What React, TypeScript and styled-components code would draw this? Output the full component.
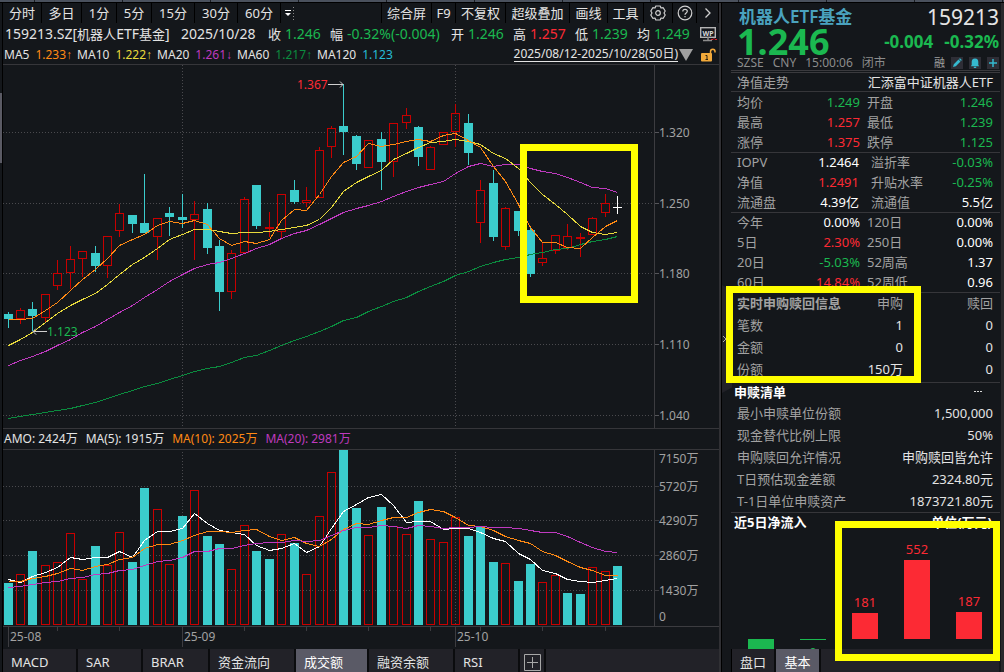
import React from 'react';
import styled, { createGlobalStyle, css } from 'styled-components';

const color = {
  bg: '#14171b',
  tab: '#222228',
  tabActive: '#5a5a66',
  line: '#36363a',
  text: '#e4e4e4',
  dim: '#a2a2a2',
  faint: '#8c8c8c',
  white: '#ffffff',
  green: '#1bb850',
  red: '#fc2a34',
  candleRed: '#c80000',
  cyan: '#3bcccc',
  orange: '#ff8a14',
  yellow: '#e8da3c',
  purple: '#bf3abf',
  deepGreen: '#0b8c3f',
  sky: '#26bcd6',
  mark: '#ffff00',
};

type Tone = keyof typeof color;

const GlobalStyle = createGlobalStyle`
  * { box-sizing: border-box; }
  body {
    margin: 0;
    background: ${color.bg};
    color: ${color.text};
    font-family: "Noto Sans", "Noto Sans CJK SC", sans-serif;
    font-size: 13px;
    line-height: 20px;
  }
  button { font: inherit; color: inherit; background: none; border: 0; padding: 0; cursor: pointer; }
  svg { display: block; }
`;

/* ---------- shell ---------- */

const Shell = styled.div`
  display: flex;
  flex-direction: column;
  min-height: 100vh;
`;

const WindowStrip = styled.div`
  height: 3px;
  border-bottom: 1px solid #000;
  background: repeating-linear-gradient(90deg, #4a515d 0 34px, #1a1d22 34px 35px, #4a515d 35px 88px);
`;

const Columns = styled.div`
  display: flex;
  flex: 1;
`;

const ScrollRail = styled.div`
  width: 3px;
  flex: none;
  border-right: 1px solid #000;
  padding-top: 90px;
`;

const ScrollThumb = styled.div`
  height: 70px;
  background: #5a5a64;
`;

const ChartPane = styled.main`
  flex: 1;
  min-width: 0;
  display: flex;
  flex-direction: column;
`;

/* ---------- chart pane ---------- */

const Toolbar = styled.nav`
  display: flex;
  height: 20px;
`;

const ToolButton = styled.button<{ $w: number }>`
  width: ${(p) => p.$w}px;
  display: flex;
  align-items: center;
  justify-content: center;
  white-space: nowrap;
  border-right: 1px solid #000;
`;

const ToolSpacer = styled.div`
  flex: 1;
  border-right: 1px solid #000;
`;

const QuoteLine = styled.div`
  display: flex;
  align-items: center;
  height: 22px;
  padding: 0 2px;
  font-size: 14px;
  white-space: nowrap;
`;

const Symbol = styled.span`
  width: 176px;
`;

const QuoteDate = styled.span`
  width: 87px;
`;

const QuoteItem = styled.span<{ $w: number }>`
  display: flex;
  gap: 4px;
  width: ${(p) => p.$w}px;
`;

const Caption = styled.span`
  font-size: 13px;
`;

const Value = styled.span<{ $tone?: Tone }>`
  color: ${(p) => color[p.$tone ?? 'text']};
`;

const Arrow = styled.span`
  font-family: "Liberation Sans", sans-serif;
`;

const PushRight = styled.span`
  margin-left: auto;
`;

const AverageLine = styled.div`
  display: flex;
  align-items: center;
  height: 20px;
  padding: 0 3px 0 1px;
  font-size: 12px;
  white-space: nowrap;
  border-bottom: 1px solid ${color.line};
`;

const Average = styled.span`
  display: flex;
  gap: 6px;
  margin-right: 5px;
`;

const RangeButton = styled.button`
  display: flex;
  align-items: center;
  margin-left: auto;
  margin-right: 8px;
`;

const RangeText = styled.span`
  line-height: 14px;
  border-bottom: 1px solid ${color.text};
`;

const AmountLine = styled.div`
  display: flex;
  gap: 8px;
  align-items: center;
  height: 22px;
  padding-left: 1px;
  font-size: 12px;
  border-top: 1px solid ${color.line};
  border-bottom: 1px solid ${color.line};
`;

const Plot = styled.svg`
  width: 100%;
  height: auto;
  font-size: 12px;
`;

const BottomTabs = styled.nav`
  display: flex;
  height: 23px;
  background: ${color.tab};
`;

const BottomTab = styled.button<{ $w: number; $active?: boolean; $center?: boolean }>`
  width: ${(p) => p.$w}px;
  height: 23px;
  display: flex;
  align-items: center;
  justify-content: ${(p) => (p.$center ? 'center' : 'flex-start')};
  padding-left: ${(p) => (p.$center ? 0 : 8)}px;
  padding-top: 3px;
  border-right: 2px solid #0b0c0e;
  ${(p) =>
    p.$active &&
    css`
      background: ${color.tabActive};
      color: ${color.white};
    `}
`;

/* ---------- side pane ---------- */

const Divider = styled.div`
  width: 3px;
  flex: none;
  background: #303034;
  border-right: 1px solid #000;
`;

const SidePane = styled.aside`
  position: relative;
  width: 282px;
  flex: none;
  display: flex;
  flex-direction: column;
  padding: 0 1px 0 9px;
  border-right: 3px solid #29292c;
`;

const CollapseHandle = styled.button`
  position: absolute;
  left: 0;
  top: 282px;
  width: 10px;
  height: 108px;
  background: ${color.tab};
  clip-path: polygon(0 0, 100% 5%, 100% 95%, 0 100%);
`;

const Highlight = styled.div<{ $left: number; $top: number; $w: number; $h: number }>`
  position: absolute;
  left: ${(p) => p.$left}px;
  top: ${(p) => p.$top}px;
  width: ${(p) => p.$w}px;
  height: ${(p) => p.$h}px;
  border: 7px solid ${color.mark};
  pointer-events: none;
`;

const Head = styled.header`
  height: 70px;
  padding: 3px 1px 0 6px;
  border-bottom: 3px double #3a3a3e;
`;

const HeadRow = styled.div<{ $h: number }>`
  display: flex;
  justify-content: space-between;
  align-items: center;
  height: ${(p) => p.$h}px;
`;

const FundName = styled.h1`
  margin: 0 0 0 2px;
  font-size: 17px;
  font-weight: 600;
  color: #4aa2be;
`;

const Code = styled.span`
  font-size: 21px;
`;

const Price = styled.strong`
  font-size: 36px;
  color: ${color.green};
`;

const Change = styled.span`
  display: flex;
  gap: 11px;
  font-size: 17px;
  font-weight: 700;
  color: ${color.green};
`;

const Meta = styled.div`
  display: flex;
  font-size: 12px;
  gap: 9px;
  color: ${color.faint};
`;

const HeadTools = styled.div`
  display: flex;
  align-items: center;
  gap: 6px;
  font-size: 11px;
  color: ${color.dim};
`;

const MiniButton = styled.button`
  width: 12px;
  height: 12px;
  background: #2e2e36;
`;

const NavRow = styled.div`
  display: flex;
  justify-content: space-between;
  align-items: center;
  height: 19px;
  padding: 0 7px 1px 6px;
  border-bottom: 1px solid ${color.line};
`;

const Table = styled.table<{ $row: number; $bottom?: number }>`
  width: 100%;
  table-layout: fixed;
  border-collapse: separate;
  border-spacing: 0;
  border-bottom: 1px solid ${color.line};
  margin: 0 0 -1px;
  padding-bottom: ${(p) => p.$bottom ?? 0}px;
  tr { height: ${(p) => p.$row}px; }
  th, td { padding: 0; white-space: nowrap; line-height: ${(p) => p.$row}px; }
  th { font-weight: 400; text-align: left; color: ${color.dim}; }
  td { text-align: right; }
  th:first-child { padding-left: 6px; }
  td:last-child, th:last-child { padding-right: 7px; }
`;

const SecondLabel = styled.th<{ $gap: number }>`
  && { padding-left: ${(p) => p.$gap}px; }
`;

const NumberHead = styled.th`
  && { text-align: right; }
`;

const BoldHead = styled.th`
  && { font-weight: 700; }
`;

const Section = styled.div`
  display: flex;
  justify-content: space-between;
  align-items: center;
  height: 20px;
  padding: 0 8px 0 3px;
  font-weight: 700;
  color: ${color.white};
`;

const MoreButton = styled.button`
  display: flex;
  width: 18px;
`;

const FlowChart = styled.svg`
  width: 100%;
  height: 117px;
  overflow: hidden;
  font-size: 13px;
`;

const SideTabs = styled(BottomTabs)`
  margin-top: auto;
  margin-right: 1px;
  border-left: 1px solid #000;
`;

/* ---------- data ---------- */

// [high, body top, body bottom, low] in plot units, oldest first
const candles: number[][] = [
  [312, 314, 319, 328], [308, 310, 319, 324], [302, 309, 316, 331], [294, 294, 318, 322], [260, 273, 286, 290],
  [246, 259, 273, 289], [251, 251, 259, 277], [246, 253, 266, 272], [236, 236, 266, 278], [204, 213, 231, 237],
  [215, 215, 224, 233], [174, 223, 233, 233], [218, 218, 237, 260], [207, 213, 217, 236], [194, 217, 220, 228],
  [201, 214, 220, 260], [203, 209, 248, 254], [240, 246, 292, 311], [250, 253, 292, 299], [197, 199, 253, 253],
  [185, 185, 226, 229], [212, 227, 229, 237], [194, 194, 232, 238], [180, 190, 202, 204], [187, 200, 203, 207],
  [147, 150, 198, 198], [126, 128, 147, 158], [84, 126, 132, 155], [135, 136, 164, 170], [140, 140, 168, 168],
  [132, 139, 162, 190], [123, 123, 162, 177], [108, 115, 123, 129], [126, 127, 157, 166], [146, 147, 170, 170],
  [132, 132, 145, 145], [104, 113, 132, 147], [114, 123, 153, 165], [180, 190, 223, 243], [170, 183, 237, 241],
  [207, 208, 247, 250], [211, 211, 231, 236], [228, 230, 274, 277], [242, 258, 263, 266], [235, 235, 251, 254],
  [224, 236, 248, 250], [233, 237, 239, 257], [217, 218, 235, 235], [194, 203, 213, 217], [196, 207, 208, 214],
];
const candleKinds = 'drdrrrrdrrddrddrddrrdrrdrrrddrdrrdrrrdrdrddrrrrrrw';

const volumes = [
  583, 574, 551, 565, 562, 533, 579, 546, 565, 532, 562, 488, 509, 564, 516, 490, 536, 544, 569, 525, 551, 559, 534,
  543, 574, 516, 472, 450, 508, 535, 507, 526, 534, 501, 539, 542, 517, 536, 526, 562, 563, 581, 564, 582, 575, 593,
  594, 567, 571, 566,
];
const volumeKinds = 'drdrrrrdrrddrrdrddrrddrdrrrddrdrrdrrrdddrddrrddrrd';

const priceLines: { tone: Tone; ys: number[] }[] = [
  {
    tone: 'deepGreen',
    ys: [418, 416, 414, 412, 410, 408, 405, 402, 398, 394, 390, 386, 383, 379, 375, 371, 368, 366, 362, 357, 355, 350, 345, 340, 336, 331, 326, 320, 317, 311, 306, 301, 297, 291, 286, 281, 275, 271, 266, 262, 259, 257, 254, 252, 249, 248, 244, 241, 239, 236],
  },
  {
    tone: 'purple',
    ys: [365, 360, 356, 351, 345, 339, 332, 326, 319, 312, 305, 297, 289, 281, 274, 268, 264, 262, 258, 253, 248, 244, 238, 233, 230, 224, 218, 212, 208, 205, 201, 196, 191, 187, 184, 181, 173, 166, 163, 166, 164, 164, 168, 171, 173, 177, 182, 187, 188, 192],
  },
  {
    tone: 'yellow',
    ys: [345, 339, 332, 322, 313, 305, 299, 293, 284, 274, 264, 257, 248, 239, 234, 229, 229, 231, 233, 232, 232, 231, 229, 227, 225, 219, 207, 191, 182, 176, 170, 159, 153, 147, 142, 141, 139, 141, 144, 153, 158, 168, 182, 194, 204, 214, 226, 232, 234, 232],
  },
  {
    tone: 'orange',
    ys: [319, 319, 318, 310, 302, 290, 279, 269, 258, 245, 239, 234, 225, 221, 223, 220, 224, 238, 245, 241, 243, 239, 220, 209, 210, 194, 176, 162, 156, 143, 146, 144, 141, 139, 141, 135, 133, 140, 147, 166, 181, 204, 227, 242, 242, 247, 248, 237, 226, 220],
  },
];

const volumeLines: { tone: Tone; ys: number[] }[] = [
  {
    tone: 'white',
    ys: [579, 582, 576, 572, 567, 557, 559, 557, 557, 551, 557, 540, 531, 531, 528, 513, 523, 530, 532, 534, 545, 550, 548, 543, 552, 546, 528, 511, 504, 497, 494, 505, 522, 521, 521, 529, 528, 528, 532, 538, 541, 553, 559, 570, 573, 579, 581, 582, 580, 578],
  },
  {
    tone: 'orange',
    ys: [581, 581, 578, 576, 573, 568, 570, 566, 564, 559, 557, 548, 544, 544, 540, 535, 531, 531, 532, 530, 529, 536, 540, 537, 543, 546, 539, 529, 523, 524, 520, 517, 517, 512, 509, 511, 517, 525, 526, 530, 536, 540, 543, 551, 555, 561, 567, 570, 575, 575],
  },
  {
    tone: 'purple',
    ys: [587, 586, 584, 582, 581, 578, 577, 574, 573, 570, 569, 565, 561, 560, 557, 551, 551, 548, 548, 545, 543, 542, 542, 540, 541, 540, 535, 530, 527, 527, 525, 526, 528, 525, 526, 528, 527, 527, 526, 527, 527, 528, 530, 532, 532, 536, 542, 547, 551, 552],
  },
];

const slotX = (i: number) => Math.floor(8 + 12.44 * i);
const toPoints = (ys: number[]) => ys.map((y, i) => `${slotX(i) + 0.5},${y + 0.5}`).join(' ');

const priceTicks: [number, string][] = [
  [132, '1.320'], [203, '1.250'], [273, '1.180'], [344, '1.110'], [415, '1.040'],
];
const volumeTicks: [number, string][] = [
  [486, '5720万'], [520, '4290万'], [555, '2860万'], [590, '1430万'],
];
const months: [number, string][] = [[8, '25-08'], [182, '25-09'], [455, '25-10']];
const weekTicks = [4, 9, 19, 24, 29, 34, 38, 43, 48];

type Cell = [string, string, Tone];

const blocks: { widths: number[]; rows: [Cell, Cell][] }[] = [
  {
    widths: [66, 63, 63],
    rows: [
      [['均价', '1.249', 'green'], ['开盘', '1.246', 'green']],
      [['最高', '1.257', 'red'], ['最低', '1.239', 'green']],
      [['涨停', '1.375', 'red'], ['跌停', '1.125', 'green']],
    ],
  },
  {
    widths: [66, 62, 65],
    rows: [
      [['IOPV', '1.2464', 'white'], ['溢折率', '-0.03%', 'green']],
      [['净值', '1.2491', 'red'], ['升贴水率', '-0.25%', 'green']],
      [['流通盘', '4.39亿', 'white'], ['流通值', '5.5亿', 'white']],
    ],
  },
  {
    widths: [66, 63, 63],
    rows: [
      [['今年', '0.00%', 'white'], ['120日', '0.00%', 'white']],
      [['5日', '2.30%', 'red'], ['250日', '0.00%', 'white']],
      [['20日', '-5.03%', 'green'], ['52周高', '1.37', 'white']],
      [['60日', '14.84%', 'red'], ['52周低', '0.96', 'white']],
    ],
  },
];

const creations = [['笔数', '1', '0'], ['金额', '0', '0'], ['份额', '150万', '0']];

const basket = [
  ['最小申赎单位份额', '1,500,000'],
  ['现金替代比例上限', '50%'],
  ['申购赎回允许情况', '申购赎回皆允许'],
  ['T日预估现金差额', '2324.80元'],
  ['T-1日单位申赎资产', '1873721.80元'],
];

/* ---------- charts ---------- */

const PriceChart = () => (
  <Plot viewBox="3 65 716 363" role="img" aria-label="日K线">
    <g stroke="#4a4a4e" strokeDasharray="1 2" shapeRendering="crispEdges">
      {priceTicks.map(([y]) => <line key={y} x1="3" x2="654" y1={y + 0.5} y2={y + 0.5} />)}
      <line x1="182.5" x2="182.5" y1="65" y2="428" />
      <line x1="455.5" x2="455.5" y1="65" y2="428" />
    </g>
    <line x1="654.5" x2="654.5" y1="65" y2="428" stroke="#3c3c40" />
    {priceTicks.map(([y, label]) => (
      <g key={label}>
        <line x1="655" x2="659" y1={y + 0.5} y2={y + 0.5} stroke="#55555a" />
        <text x="659" y={y + 5} fill={color.dim}>{label}</text>
      </g>
    ))}
    <g shapeRendering="crispEdges">
      {candles.map(([high, top, bottom, low], i) => {
        const x = slotX(i);
        const kind = candleKinds[i];
        if (kind === 'd') {
          return (
            <g key={i} fill={color.cyan}>
              <rect x={x} y={high} width="1" height={low - high} />
              <rect x={x - 4} y={top} width="9" height={bottom - top} />
            </g>
          );
        }
        const tint = kind === 'w' ? color.white : color.candleRed;
        return (
          <g key={i} fill={tint}>
            <rect x={x} y={high} width="1" height={kind === 'w' ? low - high : Math.max(0, top - high)} />
            <rect x={x} y={bottom} width="1" height={Math.max(0, low - bottom)} />
            {bottom - top < 3 ? (
              <rect x={x - 4} y={top} width="9" height={bottom - top} />
            ) : (
              <rect x={x - 3.5} y={top + 0.5} width="8" height={bottom - top - 1} fill="none" stroke={tint} />
            )}
          </g>
        );
      })}
      {priceLines.map((l) => (
        <polyline key={l.tone} points={toPoints(l.ys)} fill="none" stroke={color[l.tone]} />
      ))}
    </g>
    <g fill="none" stroke="#cfcfcf">
      <path d="M328 84.5H343M340 81.5L343 84.5L340 87.5" />
      <path d="M47 331.5H33M36 328.5L33 331.5L36 334.5" />
    </g>
    <text x="297" y="89" fill={color.red}>1.367</text>
    <text x="47" y="336" fill={color.green}>1.123</text>
    <rect x="523.5" y="147.5" width="111" height="152" fill="none" stroke={color.mark} strokeWidth="7" />
  </Plot>
);

const VolumeChart = () => (
  <Plot viewBox="3 450 716 199" role="img" aria-label="成交额">
    <g stroke="#4a4a4e" strokeDasharray="1 2" shapeRendering="crispEdges">
      {volumeTicks.map(([y]) => <line key={y} x1="3" x2="654" y1={y + 0.5} y2={y + 0.5} />)}
      <line x1="182.5" x2="182.5" y1="452" y2="626" />
      <line x1="455.5" x2="455.5" y1="452" y2="626" />
    </g>
    <g stroke="#3c3c40" shapeRendering="crispEdges">
      <line x1="654.5" x2="654.5" y1="450" y2="626" />
      <line x1="3" x2="719" y1="626.5" y2="626.5" />
      {weekTicks.map((i) => <line key={i} x1={slotX(i) + 0.5} x2={slotX(i) + 0.5} y1="627" y2="631" />)}
      {months.map(([x]) => <line key={x} x1={x + 0.5} x2={x + 0.5} y1="627" y2="647" />)}
      {volumeTicks.map(([y]) => <line key={y} x1="655" x2="659" y1={y + 0.5} y2={y + 0.5} />)}
    </g>
    <g fill={color.dim}>
      {months.map(([x, label]) => <text key={x} x={x + 2} y="641">{label}</text>)}
      <text x="659" y="463">7150万</text>
      {volumeTicks.map(([y, label]) => <text key={y} x="659" y={y + 5}>{label}</text>)}
      <text x="659" y="621">0</text>
    </g>
    <g shapeRendering="crispEdges">
      {volumes.map((top, i) =>
        volumeKinds[i] === 'd' ? (
          <rect key={i} x={slotX(i) - 4} y={top} width="9" height={625 - top} fill={color.cyan} />
        ) : (
          <rect key={i} x={slotX(i) - 3.5} y={top + 0.5} width="8" height={624 - top} fill="none" stroke={color.candleRed} />
        ),
      )}
      {volumeLines.map((l) => (
        <polyline key={l.tone} points={toPoints(l.ys)} fill="none" stroke={color[l.tone]} />
      ))}
    </g>
  </Plot>
);

const NetFlowChart = () => (
  <FlowChart viewBox="731 532 269 117" preserveAspectRatio="xMinYMin meet" role="img" aria-label="近5日净流入">
    <g fill={color.green}>
      <rect x="748" y="639" width="26" height="10" />
      <rect x="800" y="639" width="26" height="1" />
      <text x="813" y="657" textAnchor="middle">0</text>
    </g>
    <g fill={color.red} textAnchor="middle">
      <rect x="852" y="613" width="26" height="26" />
      <text x="865" y="607">181</text>
      <rect x="904" y="560" width="26" height="79" />
      <text x="917" y="554">552</text>
      <rect x="956" y="612" width="26" height="27" />
      <text x="969" y="606">187</text>
    </g>
  </FlowChart>
);

/* ---------- icons ---------- */

const MoreIcon = () => (
  <svg width="14" height="20" viewBox="0 0 14 20">
    <rect x="4" y="7" width="6" height="1" fill="#fff" />
    <path d="M4 10h6l-3 3z" fill="#fff" />
    <path d="M12.5 4v14" stroke="#8a8a8a" strokeDasharray="1 2" />
  </svg>
);

const GearIcon = () => (
  <svg width="16" height="16" viewBox="0 0 16 16" fill="none" stroke="#d0d0d0" strokeWidth="1.2" strokeLinejoin="round">
    <path d="M5.8 1h4.4l.8 2 2.200-.3 2 3.300L14 8l1.200 2-2 3.300L11 13l-.8 2H5.800L5 13l-2.200.3-2-3.300L2 8 .8 6l2-3.300L5 3z" />
    <circle cx="8" cy="8" r="2.300" />
  </svg>
);

const HelpIcon = () => (
  <svg width="16" height="16" viewBox="0 0 16 16" fill="none" stroke="#d0d0d0" strokeWidth="1.200">
    <circle cx="8" cy="8" r="6.800" />
    <path d="M5.800 6.400C5.800 3.600 10.300 3.700 10.300 6.300 10.300 8 8 7.900 8 9.800M8 11v1.300" />
  </svg>
);

const ChevronIcon = () => (
  <svg width="10" height="12" viewBox="0 0 10 12" fill="none" stroke="#d0d0d0" strokeWidth="1.300">
    <path d="M2.500 1.500L7 6L2.500 10.500" />
  </svg>
);

const ScreenIcon = () => (
  <svg width="17" height="16" viewBox="0 0 17 16">
    <rect x="0.700" y="1.700" width="14.600" height="9.600" fill="none" stroke="#b4b4b4" strokeWidth="1.400" />
    <text x="8" y="9.500" fontSize="7" fontWeight="700" fill="#d8d8d8" textAnchor="middle">WP</text>
    <path d="M8 11v3M3 14.500h9" stroke="#8c8c8c" strokeWidth="1.500" />
    <path d="M11 13.500h2l1-1 1 1h2" stroke="#e0202a" fill="none" />
  </svg>
);

const LockIcon = () => (
  <svg width="15" height="14" viewBox="0 0 15 14">
    <path d="M9.500 6V3.500C9.500 0.500 14 0.500 14 3.500V4.500" fill="none" stroke="#f2a93a" strokeWidth="1.500" />
    <rect x="0" y="5" width="11" height="8.500" rx="1" fill="#f2a93a" />
    <path d="M4.500 7.500h1.500v4M4.500 11.500h2.500" fill="none" stroke="#2a2110" />
  </svg>
);

/* ---------- page ---------- */

const periods: [string, number][] = [
  ['分时', 39], ['多日', 40], ['1分', 35], ['5分', 35], ['15分', 43], ['30分', 43], ['60分', 43],
];
const tools: [string, number][] = [
  ['综合屏', 50], ['F9', 24], ['不复权', 50], ['超级叠加', 64], ['画线', 38], ['工具', 36],
];
const quotes: [string, string, Tone, number][] = [
  ['收', '1.246', 'green', 62],
  ['幅', '-0.32%(-0.004)', 'green', 121],
  ['开', '1.246', 'green', 62],
  ['高', '1.257', 'red', 62],
  ['低', '1.239', 'green', 62],
  ['均', '1.249', 'green', 54],
];
const averages: [string, string, string, Tone][] = [
  ['MA5', '1.233', '↑', 'orange'],
  ['MA10', '1.222', '↑', 'yellow'],
  ['MA20', '1.261', '↓', 'purple'],
  ['MA60', '1.217', '↑', 'deepGreen'],
  ['MA120', '1.123', '', 'sky'],
];
const indicators: [string, number][] = [
  ['MACD', 75], ['SAR', 65], ['BRAR', 67], ['资金流向', 86], ['成交额', 73], ['融资余额', 86], ['RSI', 65],
];

export default function App() {
  return (
    <>
      <GlobalStyle />
      <Shell>
        <WindowStrip />
        <Columns>
          <ScrollRail>
            <ScrollThumb />
          </ScrollRail>
          <ChartPane>
            <Toolbar>
              {periods.map(([label, w]) => <ToolButton key={label} $w={w}>{label}</ToolButton>)}
              <MoreIcon />
              <ToolSpacer />
              {tools.map(([label, w]) => <ToolButton key={label} $w={w}>{label}</ToolButton>)}
              <ToolButton $w={29} aria-label="设置"><GearIcon /></ToolButton>
              <ToolButton $w={24} aria-label="帮助"><HelpIcon /></ToolButton>
              <ToolButton $w={22} aria-label="更多"><ChevronIcon /></ToolButton>
            </Toolbar>

            <QuoteLine>
              <Symbol>159213.SZ[<Caption>机器人</Caption>ETF<Caption>基金</Caption>]</Symbol>
              <QuoteDate>2025/10/28</QuoteDate>
              {quotes.map(([label, value, tone, w]) => (
                <QuoteItem key={label} $w={w}>
                  <Caption>{label}</Caption>
                  <Value $tone={tone}>{value}</Value>
                </QuoteItem>
              ))}
              <PushRight><ScreenIcon /></PushRight>
            </QuoteLine>

            <AverageLine>
              {averages.map(([label, value, arrow, tone]) => (
                <Average key={label}>
                  <span>{label}</span>
                  <Value $tone={tone}>{value}<Arrow>{arrow}</Arrow></Value>
                </Average>
              ))}
              <RangeButton>
                <RangeText>2025/08/12-2025/10/28(50日)</RangeText>
                <svg width="15" height="12" viewBox="0 0 15 12"><path d="M1 0h14L8 12z" fill="#a0a0a0" /></svg>
              </RangeButton>
              <LockIcon />
            </AverageLine>

            <PriceChart />

            <AmountLine>
              <span>AMO: 2424万</span>
              <span>MA(5): 1915万</span>
              <Value $tone="orange">MA(10): 2025万</Value>
              <Value $tone="purple">MA(20): 2981万</Value>
            </AmountLine>

            <VolumeChart />

            <BottomTabs>
              {indicators.map(([label, w]) => (
                <BottomTab key={label} $w={w} $active={label === '成交额'}>{label}</BottomTab>
              ))}
              <BottomTab $w={26} $center aria-label="添加指标">
                <svg width="17" height="17" viewBox="0 0 17 17" fill="none" stroke="#a8a8a8">
                  <path d="M0.500 0.500h16v16h-16zM8.500 3v11M3 8.500h11" />
                </svg>
              </BottomTab>
            </BottomTabs>
          </ChartPane>

          <Divider />

          <SidePane>
            <CollapseHandle aria-label="收起">
              <svg width="6" height="8" viewBox="0 0 6 8" fill="none" stroke="#b0b0b0"><path d="M1 1l3 3-3 3" /></svg>
            </CollapseHandle>

            <Head>
              <HeadRow $h={22}>
                <FundName>机器人ETF基金</FundName>
                <Code>159213</Code>
              </HeadRow>
              <HeadRow $h={27}>
                <Price>1.246</Price>
                <Change><span>-0.004</span><span>-0.32%</span></Change>
              </HeadRow>
              <HeadRow $h={15}>
                <Meta><span>SZSE</span><span>CNY</span><span>15:00:06</span><span>闭市</span></Meta>
                <HeadTools>
                  <span>融</span>
                  <MiniButton aria-label="编辑">
                    <svg width="12" height="12" viewBox="0 0 12 12" fill="#35b9cf"><path d="M2 10l.8-2.800L7.500 2.500l2 2L4.800 9.200zM8 2l1-.8 1.800 1.800-.8 1z" /></svg>
                  </MiniButton>
                  <MiniButton aria-label="提醒">
                    <svg width="12" height="12" viewBox="0 0 12 12" fill="#35b9cf"><path d="M6 1.500c-2.500 0-3.300 1.800-3.300 3.500v3L1.800 9.200h8.400L9.300 8V5C9.300 3.300 8.500 1.500 6 1.500zM4.800 9.800h2.400V11H4.800z" /></svg>
                  </MiniButton>
                  <MiniButton aria-label="添加自选">
                    <svg width="12" height="12" viewBox="0 0 12 12" stroke="#35b9cf" strokeWidth="1.500"><path d="M6 2v8M2 6h8" /></svg>
                  </MiniButton>
                </HeadTools>
              </HeadRow>
            </Head>

            <NavRow>
              <Value $tone="dim">净值走势</Value>
              <span>汇添富中证机器人ETF</span>
            </NavRow>

            {blocks.map((block, b) => (
              <Table key={b} $row={20}>
                <colgroup>
                  {block.widths.map((w, i) => <col key={i} width={w} />)}
                  <col />
                </colgroup>
                <tbody>
                  {block.rows.map(([a, c]) => (
                    <tr key={a[0]}>
                      <th scope="row">{a[0]}</th>
                      <td><Value $tone={a[2]}>{a[1]}</Value></td>
                      <SecondLabel scope="row" $gap={b === 1 ? 12 : 7}>{c[0]}</SecondLabel>
                      <td><Value $tone={c[2]}>{c[1]}</Value></td>
                    </tr>
                  ))}
                </tbody>
              </Table>
            ))}

            <Table $row={22} $bottom={2}>
              <colgroup><col width="120" /><col width="52" /><col /></colgroup>
              <thead>
                <tr>
                  <BoldHead scope="col">实时申购赎回信息</BoldHead>
                  <NumberHead scope="col">申购</NumberHead>
                  <NumberHead scope="col">赎回</NumberHead>
                </tr>
              </thead>
              <tbody>
                {creations.map(([label, buy, sell]) => (
                  <tr key={label}><th scope="row">{label}</th><td>{buy}</td><td>{sell}</td></tr>
                ))}
              </tbody>
            </Table>

            <Section>
              <span>申赎清单</span>
              <MoreButton aria-label="更多清单">
                <svg width="9" height="2" viewBox="0 0 9 2" fill="#d8d8d8"><path d="M0 0h2v1H0zM3 0h2v1H3zM6 0h2v1H6z" /></svg>
              </MoreButton>
            </Section>
            <Table $row={22}>
              <tbody>
                {basket.map(([label, value]) => (
                  <tr key={label}><th scope="row">{label}</th><td>{value}</td></tr>
                ))}
              </tbody>
            </Table>

            <Section>
              <span>近5日净流入</span>
              <span>单位(万元)</span>
            </Section>
            <NetFlowChart />

            <SideTabs>
              <BottomTab $w={44} $center>盘口</BottomTab>
              <BottomTab $w={45} $center $active>基本</BottomTab>
            </SideTabs>

            <Highlight $left={4} $top={283} $w={195} $h={97} />
            <Highlight $left={113} $top={518} $w={165} $h={140} />
          </SidePane>
        </Columns>
      </Shell>
    </>
  );
}
